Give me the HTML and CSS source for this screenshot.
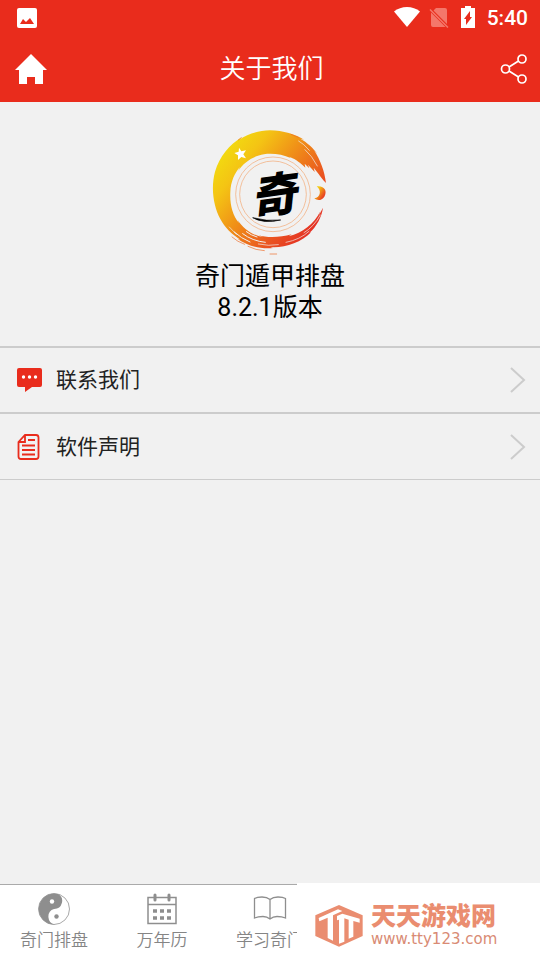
FILE: index.html
```html
<!DOCTYPE html>
<html lang="zh-CN">
<head>
<meta charset="utf-8">
<meta name="viewport" content="width=device-width, initial-scale=1">
<title>关于我们</title>
<link rel="stylesheet" href="styles.css">
</head>
<body>
<header class="top">
  <div class="status">
    <svg class="status-photo" width="20" height="20" viewBox="0 0 20 20" aria-hidden="true">
      <rect width="20" height="20" rx="2" fill="#fff"/>
      <path d="M3 16l3-5 3 3 4-4 4 6z" fill="#e92c1c"/>
    </svg>
    <div class="status-right">
      <svg width="28" height="22" viewBox="0 0 28 22" aria-hidden="true">
        <path d="M1 5.500C8 -.5 20 -.5 27 5.500L14 21z" fill="#fff"/>
      </svg>
      <svg width="20" height="22" viewBox="0 0 20 22" aria-hidden="true">
        <path d="M7 2h9q2 0 2 2v14L4.500 4.500zM2 6.500l14.500 14.500H4q-2 0-2-2z" fill="#f4776a"/>
        <path d="M1 3.500l18 18" stroke="#f4776a" stroke-width="1.500"/>
      </svg>
      <svg width="14" height="22" viewBox="0 0 14 22" aria-hidden="true">
        <path d="M4 0h6v2h4v20H0V2h4z" fill="#fff"/>
        <path d="M9 5v6h2l-6 8v-6H3z" fill="#e92c1c"/>
      </svg>
      <span class="clock">5:40</span>
    </div>
  </div>
  <div class="bar">
    <button class="icon-btn" type="button" aria-label="首页">
      <svg width="32" height="30" viewBox="0 0 32 30"><path d="M16 0l16 16h-4v14h-8v-7h-8v7H4V16H0z" fill="#fff"/></svg>
    </button>
    <h1 class="title">关于我们</h1>
    <button class="icon-btn icon-btn-end" type="button" aria-label="分享">
      <svg width="28" height="32" viewBox="0 0 28 32" fill="none" stroke="#fff" stroke-width="1.700">
        <circle cx="5.500" cy="16" r="4"/><circle cx="22" cy="6" r="4"/><circle cx="22" cy="26" r="4"/>
        <path d="M9 14l9.500-6M9 18l9.500 6"/>
      </svg>
    </button>
  </div>
</header>

<main class="content">
  <section class="about">
    <svg class="logo" width="120" height="128" viewBox="60 20 360 384" role="img" aria-label="奇门遁甲排盘">
      <defs>
        <linearGradient id="ring" x1="0.050" y1="0.200" x2="0.900" y2="0.900">
          <stop offset="0" stop-color="#f2dc10"/>
          <stop offset="0.200" stop-color="#f4c414"/>
          <stop offset="0.450" stop-color="#f09018"/>
          <stop offset="0.750" stop-color="#ea5320"/>
          <stop offset="1" stop-color="#e32a25"/>
        </linearGradient>
      </defs>
      <path fill="url(#ring)" d="M408 188C404 152 391 119 373 91L382 101C370 83 351 66 331 55L342 58C318 43 279 30 240 30C206 31 174 40 148 58L155 51C119 72 88 110 75 154C62 203 70 257 91 296C104 321 125 342 151 358L142 355C173 377 211 387 250 383L241 380C283 383 333 368 364 335L358 338C380 318 395 290 399 262L386 286L391 273C371 313 338 337 296 348L305 342C271 352 232 353 205 345L220 351C187 345 160 325 143 299L147 308C127 284 119 250 121 215C122 184 134 158 150 140L144 152C162 126 189 107 222 102C248 98 278 103 302 113L298 109C320 118 332 128 346 142L344 130L358 144L354 133L374 155L371 142L390 166L386 162L400 180Z"/>
      <g fill="none" stroke="#f1f1f1" stroke-linecap="round">
        <path stroke-width="2" d="M326 62Q340 69 358 90M345 88Q366 106 382 137"/>
        <path stroke-width="3" d="M133 335Q153 354 180 365M158 340Q187 362 226 366M169 334Q183 345 201 350"/>
        <path stroke-width="2" d="M288 366Q330 358 357 333M342 337Q371 320 391 284M118 320l21 22M205 371q31 7 60 2"/>
      </g>
      <g fill="none" stroke="#ee6b25" stroke-width="2" stroke-linecap="round">
        <path d="M126 350q17 15 38 22M174 378q24 12 49 13M240 401h20M145 59l9-7M303 42l22 9"/>
      </g>
      <g fill="none" stroke="#f3a66f" stroke-width="2"><circle cx="249" cy="222" r="112"/><circle cx="249" cy="222" r="100"/></g>
      <path fill="#fff" d="M147 82l7 11 14-3-8 12 8 12-14-4-10 9v-14l-11-7 13-4z"/>
      <path fill="url(#ring)" d="M380 198C403 195 413 212 403 229C395 241 382 242 373 234C391 232 396 211 380 198Z"/>
      <text class="logo-char" x="250" y="274" text-anchor="middle" transform="rotate(-8 254 222)">奇</text>
      <path d="M188 292Q221 311 272 299Q230 304 188 292Z" stroke="#000" stroke-width="2"/>
    </svg>
    <p class="app-name">奇门遁甲排盘</p>
    <p class="app-name">8.2.1版本</p>
  </section>

  <nav class="list" aria-label="关于">
    <a class="row" href="#contact">
      <svg width="26" height="26" viewBox="0 0 26 26" aria-hidden="true">
        <path d="M2 1h21q2 0 2 2v15q0 2-2 2h-8l-7 5v-5H2q-2 0-2-2V3q0-2 2-2z" fill="#e92c1c"/>
        <g fill="#fff"><circle cx="6.500" cy="10" r="1.700"/><circle cx="12.500" cy="10" r="1.700"/><circle cx="18.500" cy="10" r="1.700"/></g>
      </svg>
      <span class="row-label">联系我们</span>
      <svg width="16" height="26" viewBox="0 0 16 26" aria-hidden="true"><path d="M1 1l13 12L1 25" fill="none" stroke="#ccc" stroke-width="2"/></svg>
    </a>
    <a class="row" href="#statement">
      <svg width="26" height="26" viewBox="0 0 26 26" fill="none" stroke="#e92c1c" stroke-width="1.800" aria-hidden="true">
        <path d="M8 1h11q2.500 0 2.500 2.500v19q0 2.500-2.500 2.500H4q-2.500 0-2.500-2.500V8zM2 8h6V1M11 6h7M5 11.500h13M5 16h13M5 20.500h13"/>
      </svg>
      <span class="row-label">软件声明</span>
      <svg width="16" height="26" viewBox="0 0 16 26" aria-hidden="true"><path d="M1 1l13 12L1 25" fill="none" stroke="#ccc" stroke-width="2"/></svg>
    </a>
  </nav>
</main>

<footer class="bottom">
  <nav class="tabs" aria-label="主导航">
    <a class="tab" href="#pan">
      <svg width="32" height="32" viewBox="0 0 32 32" aria-hidden="true">
        <circle cx="16" cy="16" r="15.500" fill="#fff" stroke="#929292" stroke-width=".8"/>
        <path d="M20 1A15.500 15.500 0 1 0 17 31.500A8 8 0 0 1 16 16A8 8 0 0 0 20 1Z" fill="#8e8e8e"/>
        <circle cx="14" cy="8.500" r="2.200" fill="#fff"/><circle cx="18.500" cy="23.500" r="2.200" fill="#8e8e8e"/>
      </svg>
      <span>奇门排盘</span>
    </a>
    <a class="tab" href="#calendar">
      <svg width="32" height="32" viewBox="0 0 32 32" aria-hidden="true">
        <path d="M2 4.500h28v26H2zM2 11.500h28" fill="none" stroke="#8e8e8e" stroke-width="1.500"/>
        <path d="M9 2v5M23 2v5" stroke="#8e8e8e" stroke-width="3" stroke-linecap="round"/>
        <path d="M7 18h4m3 0h4m3 0h4M7 25h4m3 0h4m3 0h4" stroke="#8e8e8e" stroke-width="3.500"/>
      </svg>
      <span>万年历</span>
    </a>
    <a class="tab" href="#learn">
      <svg width="34" height="32" viewBox="0 0 34 32" fill="none" stroke="#8e8e8e" stroke-width="1.300" aria-hidden="true">
        <path d="M17 6.500Q14 4 9 4Q4 4 1.500 5.500V25Q5 23.500 10 23.500Q14 23.500 17 26Q20 23.500 24 23.500Q29 23.500 32.500 25V5.500Q30 4 25 4Q20 4 17 6.500V26"/>
      </svg>
      <span>学习奇门</span>
    </a>
  </nav>
  <aside class="mark">
    <svg width="48" height="42" viewBox="0 0 144 126" aria-hidden="true">
      <path d="M72 0L143 31V93L72 125L1 93V31z" fill="#ea8d70"/>
      <path d="M11 39L69 13L82 18L54 31V107L38 99V38L13 49z" fill="#fff"/>
      <path d="M66 33L82 26L134 41V53L115 48V95L101 101V44L88 40V110L72 116V44L66 46z" fill="#fff"/>
    </svg>
    <div class="mark-text">
      <span class="mark-name">天天游戏网</span>
      <span class="mark-url">www.tty123.com</span>
    </div>
  </aside>
</footer>
</body>
</html>
```
FILE: styles.css
```css
* { box-sizing: border-box; }

body {
  margin: 0;
  min-height: 100vh;
  display: flex;
  flex-direction: column;
  background: #f1f1f1;
  color: #000;
  font-family: Roboto, "Noto Sans CJK SC", sans-serif;
}

svg { display: block; flex: none; }
a { color: inherit; text-decoration: none; }

.top { background: #e92c1c; color: #fff; }

.status {
  display: flex;
  justify-content: space-between;
  align-items: center;
  height: 36px;
  padding: 0 12px 0 17px;
}
.status-right { display: flex; align-items: center; gap: 12px; }
.status-right svg { margin-top: -2px; }
.status-right svg + svg { margin-left: -4px; }
.status-right svg + svg + svg { margin-left: 0; }
.clock { font-size: 21px; font-weight: 500; line-height: 24px; }

.bar {
  display: grid;
  grid-template-columns: 1fr auto 1fr;
  align-items: center;
  height: 66px;
  padding: 0 12px 0 15px;
}
.icon-btn { justify-self: start; padding: 0; border: 0; background: none; cursor: pointer; }
.icon-btn-end { justify-self: end; }
.title { margin: 0; font-size: 26px; font-weight: 350; line-height: 32px; }

.content { flex: 1; }

.about {
  display: flex;
  flex-direction: column;
  align-items: center;
  padding: 25px 0 23px;
}
.logo { margin-bottom: 6px; }
.logo-char {
  font-family: "Noto Sans CJK SC", sans-serif;
  font-size: 138px;
  font-style: italic;
  font-weight: 900;
}
.app-name { margin: 0; font-size: 25px; font-weight: 400; line-height: 31px; }

.list { border-top: 2px solid #ccc; border-bottom: 1px solid #ccc; }
.row {
  display: flex;
  align-items: center;
  gap: 13px;
  height: 64px;
  padding: 0 14px 0 17px;
  color: #222;
}
.row + .row { height: 67px; border-top: 2px solid #ccc; }
.row-label { flex: 1; font-size: 21px; line-height: 28px; }

.bottom { position: relative; border-top: 1px solid #aaa; background: #fff; }
.tabs { display: grid; grid-template-columns: repeat(5, 1fr); height: 75px; }
.tab {
  display: flex;
  flex-direction: column;
  align-items: center;
  gap: 3px;
  padding-top: 8px;
  color: #858585;
  font-size: 17px;
  font-weight: 350;
  line-height: 24px;
}

.mark {
  position: absolute;
  top: -2px;
  right: 0;
  bottom: 0;
  width: 45%;
  display: flex;
  align-items: center;
  gap: 8px;
  padding: 8px 0 0 18px;
  background: #fff;
  color: #ea8d70;
}
.mark-text { display: flex; flex-direction: column; gap: 2px; }
.mark-name { font-size: 25px; font-weight: 900; line-height: 24px; }
.mark-url { font-family: "DejaVu Sans", sans-serif; font-size: 15px; line-height: 16px; color: #d98b74; }
```
